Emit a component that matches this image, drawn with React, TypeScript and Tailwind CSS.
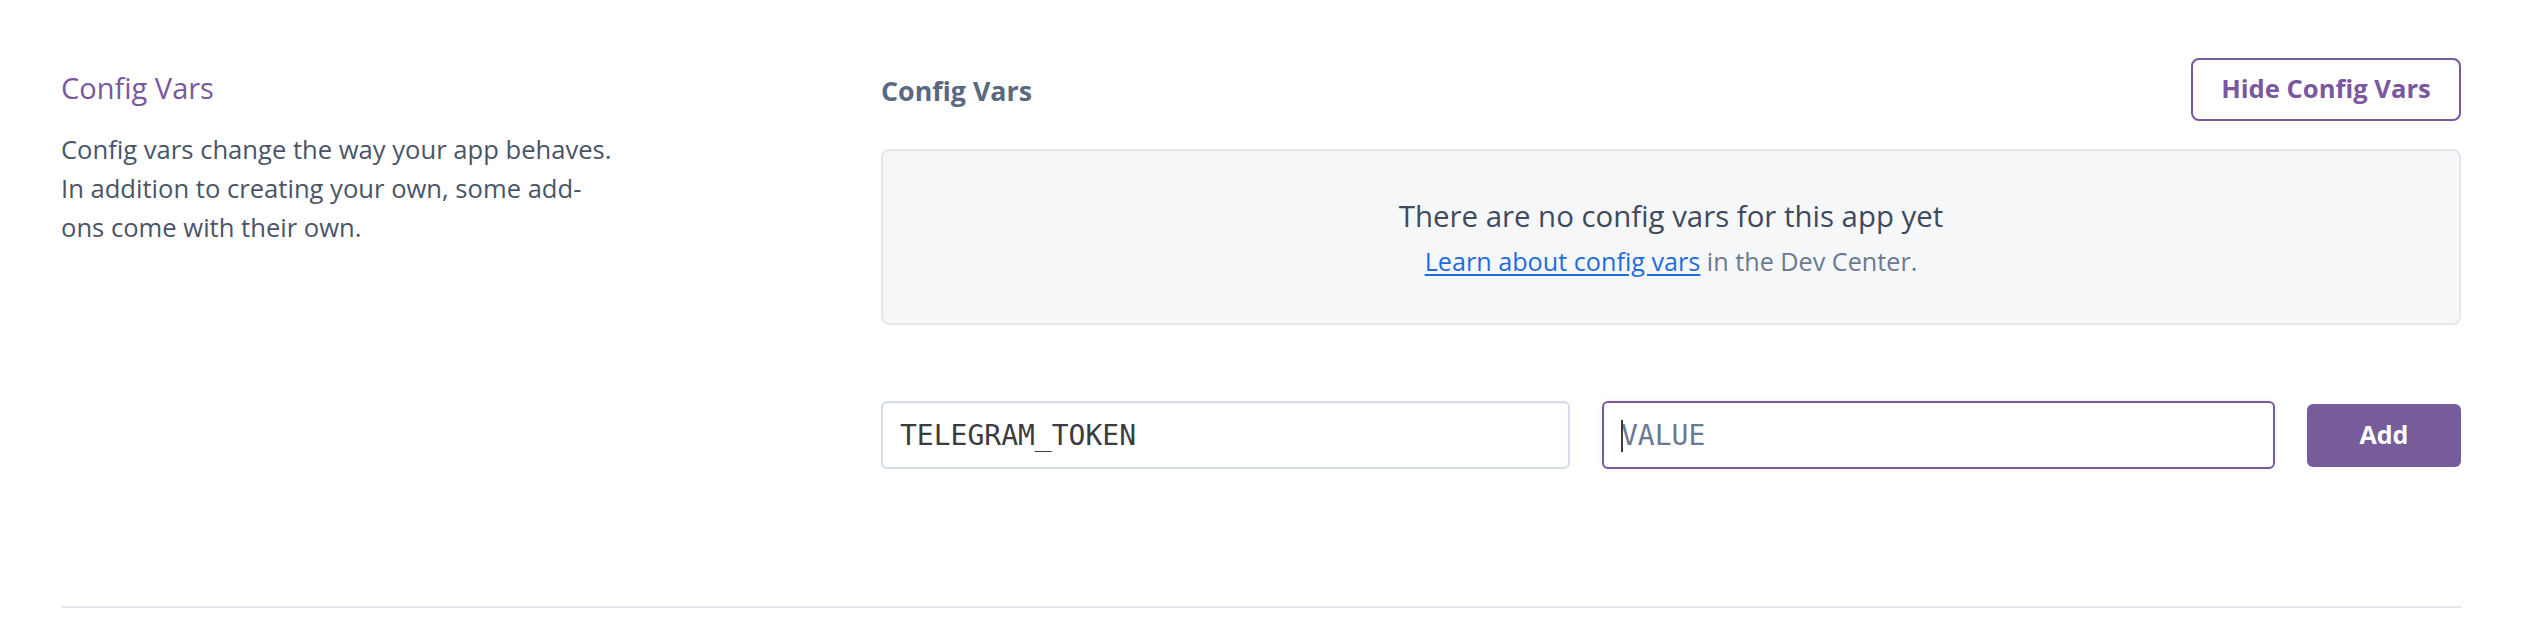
export default function App() {
  return (
    <main className="bg-white min-h-screen pl-[61px] pr-[75px] pt-[58px] font-['Open_Sans','Liberation_Sans',sans-serif]">
      <div className="flex items-start">
        {/* Left description */}
        <div className="w-[820px] shrink-0 pt-[12px]">
          <h2 className="text-[29px] leading-[36px] text-[#79589f]">Config Vars</h2>
          <p className="mt-[24px] w-[557px] text-[25.6px] leading-[39px] text-[#4a5568]">
            Config vars change the way your app behaves. In addition to creating your own, some add-ons come with their own.
          </p>
        </div>

        {/* Right panel */}
        <div className="flex-1">
          <div className="flex items-center justify-between h-[63px]">
            <h3 className="text-[26.8px] font-bold text-[#596981] pt-[4px]">Config Vars</h3>
            <button className="h-[63px] w-[270px] rounded-[8px] border-2 border-[#79589f] text-[#79589f] text-[25.6px] font-bold">
              Hide Config Vars
            </button>
          </div>

          <div className="mt-[28px] h-[176px] rounded-[8px] border-2 border-[#e4e6ea] bg-[#f6f7f9] flex flex-col items-center justify-center">
            <p className="text-[29.4px] leading-[40px] text-[#3f4a5c]">There are no config vars for this app yet</p>
            <p className="mt-[8px] text-[25.2px] leading-[34px] text-[#6b7a91]">
              <a href="#" className="text-[#1e6ce0] underline underline-offset-[3px]">Learn about config vars</a> in the Dev Center.
            </p>
          </div>

          <div className="mt-[76px] flex items-center gap-[32px]">
            <input
              readOnly
              value="TELEGRAM_TOKEN"
              className="w-[689px] h-[68px] rounded-[6px] border-2 border-[#d5dcea] bg-white px-[17px] text-[28px] text-[#3b3b40] font-['DejaVu_Sans_Mono',monospace] shadow-[inset_0_1px_2px_rgba(0,0,0,0.06)] outline-none"
            />
            <div className="relative">
              <input
                readOnly
                placeholder="VALUE"
                className="w-[673px] h-[68px] rounded-[6px] border-2 border-[#79589f] bg-white px-[17px] text-[28px] font-['DejaVu_Sans_Mono',monospace] placeholder:text-[#6b7a91] shadow-[0_0_6px_rgba(0,0,0,0.08)] outline-none"
              />
              <span className="absolute left-[19px] top-[19px] h-[32px] w-[2px] bg-[#3b3b40]" />
            </div>
            <button className="h-[63px] w-[154px] rounded-[6px] bg-[#775c9c] text-white text-[25px] font-bold">
              Add
            </button>
          </div>
        </div>
      </div>

      <div className="mt-[137px] border-t-2 border-[#e3e7ee]" />
    </main>
  )
}
